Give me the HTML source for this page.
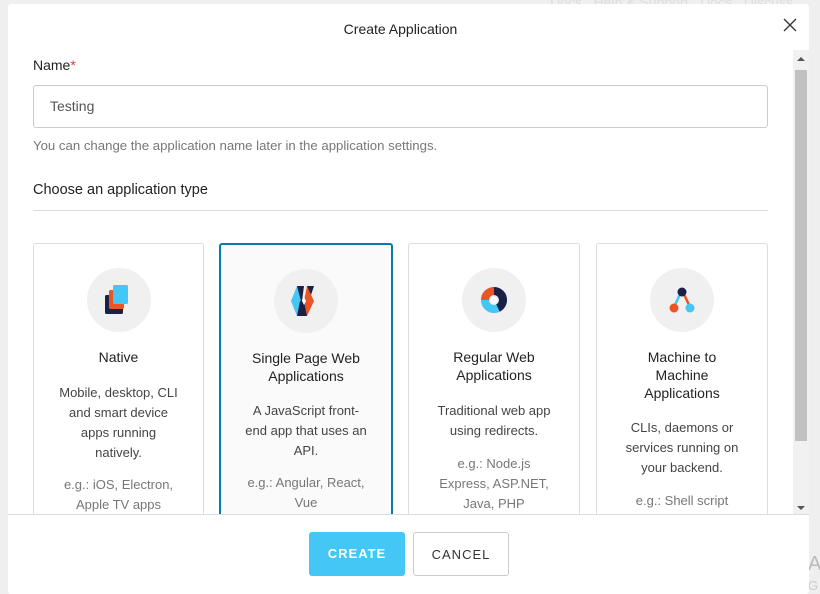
<!DOCTYPE html>
<html><head><style>
*{box-sizing:border-box;margin:0;padding:0}
body{width:820px;height:590px;overflow:hidden;background:#efefef;font-family:"Liberation Sans",sans-serif;color:#333;position:relative}
.bgtxt{position:absolute;top:-6px;left:550px;color:#ddd;font-size:14px;white-space:nowrap}
.modal{position:absolute;left:8px;top:4px;width:801px;height:590px;background:#fff;border-radius:3px;overflow:hidden}
.title{position:absolute;top:17px;left:0;width:785px;text-align:center;font-size:14px;color:#222}
.close{position:absolute;left:775px;top:14px}
.label{position:absolute;left:25px;top:53px;font-size:14px;color:#222}
.label span{color:#e53935}
.input{position:absolute;left:25px;top:81px;width:735px;height:43px;border:1px solid #ccc;border-radius:3px;padding:0 16px;line-height:41px;font-size:14px;color:#555}
.help{position:absolute;left:25px;top:134px;font-size:13.2px;color:#777}
.h2{position:absolute;left:25px;top:178px;font-size:14.5px;color:#222}
.hr{position:absolute;left:25px;top:206px;width:735px;border-top:1px solid #ddd}
.card{position:absolute;top:239px;height:290px;border:1px solid #ddd;border-radius:3px;text-align:center;font-size:13px;line-height:20px}
.card.sel{border:2px solid #0a7aa8;background:#fafafa}
.circ{position:absolute;left:50%;top:24px;margin-left:-32px;width:64px;height:64px;border-radius:50%;background:#f0f0f0}
.circ svg{position:absolute;left:16px;top:16px}
.name{position:absolute;left:0;right:0;top:104px;font-size:14px;color:#222;line-height:18px}
.desc{position:absolute;left:0;right:0;color:#444;font-size:13px;white-space:nowrap}
.ex{position:absolute;left:0;right:0;color:#777;font-size:13px;white-space:nowrap}
.sb{position:absolute;left:785px;top:46px;width:16px;height:466px;background:#f1f1f1}
.thumb{position:absolute;left:2px;top:20px;width:12px;height:371px;background:#c1c1c1}
.foot{position:absolute;left:0;top:510px;width:801px;height:80px;background:#fff;border-top:1px solid #ddd}
.btn{position:absolute;top:17px;height:44px;width:96px;font-size:13px;letter-spacing:1px;text-align:center;line-height:44px;border-radius:3px}
</style></head><body>
<div class="bgtxt">Docs &nbsp; Help &amp; Support &nbsp; Docs &nbsp; Discuss</div>
<div style="position:absolute;left:808px;top:553px;font-size:20px;color:#bbb">A</div>
<div style="position:absolute;left:808px;top:578px;font-size:13px;color:#ccc">G</div>
<div class="modal">
<div class="title">Create Application</div>
<svg class="close" width="14" height="14" viewBox="0 0 14 14"><path d="M1 1L13 13M13 1L1 13" stroke="#333" stroke-width="1.3"/></svg>
<div class="label">Name<span>*</span></div>
<div class="input">Testing</div>
<div class="help">You can change the application name later in the application settings.</div>
<div class="h2">Choose an application type</div>
<div class="hr"></div>

<div class="card" style="left:25px;width:171px">
<div class="circ"><svg width="32" height="32" viewBox="0 0 32 32"><rect x="2" y="11" width="18" height="19" rx="1.5" fill="#1b2047"/><rect x="6" y="6" width="15" height="19" rx="1.5" fill="#eb5424"/><rect x="10" y="1" width="15" height="19" rx="1.5" fill="#44c7f4"/></svg></div>
<div class="name">Native</div>
<div class="desc" style="top:139px">Mobile, desktop, CLI<br>and smart device<br>apps running<br>natively.</div>
<div class="ex" style="top:231px">e.g.: iOS, Electron,<br>Apple TV apps</div>
</div>
<div class="card sel" style="left:211px;width:174px">
<div class="circ"><svg width="32" height="32" viewBox="0 0 32 32"><path d="M7 1h7l-2 15-3 0z" fill="#1b2047"/><path d="M7 1L1 16l6 15 4-15z" fill="#44c7f4"/><path d="M17 1h7l-5 15z" fill="#1b2047"/><path d="M17 1l7 15-7 15-3-15z" fill="#eb5424"/><path d="M7 31h10l-3-15h-4z" fill="#1b2047"/><path d="M14 12l2 4-2 4-2-4z" fill="#fff"/></svg></div>
<div class="name">Single Page Web<br>Applications</div>
<div class="desc" style="top:156px">A JavaScript front-<br>end app that uses an<br>API.</div>
<div class="ex" style="top:228px">e.g.: Angular, React,<br>Vue</div>
</div>
<div class="card" style="left:400px;width:172px">
<div class="circ"><svg width="32" height="32" viewBox="0 0 32 32"><circle cx="16" cy="16" r="9" fill="none" stroke="#44c7f4" stroke-width="8"/><path d="M16 7A9 9 0 0 0 7 16" fill="none" stroke="#eb5424" stroke-width="8"/><path d="M16 7A9 9 0 0 1 25 16A9 9 0 0 1 20 24" fill="none" stroke="#1b2047" stroke-width="8"/><circle cx="16" cy="16" r="3" fill="#fff"/></svg></div>
<div class="name">Regular Web<br>Applications</div>
<div class="desc" style="top:157px">Traditional web app<br>using redirects.</div>
<div class="ex" style="top:210px">e.g.: Node.js<br>Express, ASP.NET,<br>Java, PHP</div>
</div>
<div class="card" style="left:588px;width:172px">
<div class="circ"><svg width="32" height="32" viewBox="0 0 32 32"><path d="M15 8L9 21" stroke="#44c7f4" stroke-width="2.5"/><path d="M17 8L23 21" stroke="#eb5424" stroke-width="2.5"/><circle cx="16" cy="8" r="4.5" fill="#1b2047"/><circle cx="8" cy="24" r="4.5" fill="#eb5424"/><circle cx="24" cy="24" r="4.5" fill="#44c7f4"/></svg></div>
<div class="name">Machine to<br>Machine<br>Applications</div>
<div class="desc" style="top:174px">CLIs, daemons or<br>services running on<br>your backend.</div>
<div class="ex" style="top:247px">e.g.: Shell script</div>
</div>

<div class="sb"><div style="position:absolute;left:4px;top:7px;border:4px solid transparent;border-bottom:4px solid #555;border-top:0"></div><div class="thumb"></div><div style="position:absolute;left:4px;top:456px;border:4px solid transparent;border-top:4px solid #555;border-bottom:0"></div></div>
<div class="foot">
<div class="btn" style="left:301px;background:#44c7f4;color:#fff;font-weight:bold">CREATE</div>
<div class="btn" style="left:405px;border:1px solid #ccc;color:#333">CANCEL</div>
</div>
</div>
</body></html>
